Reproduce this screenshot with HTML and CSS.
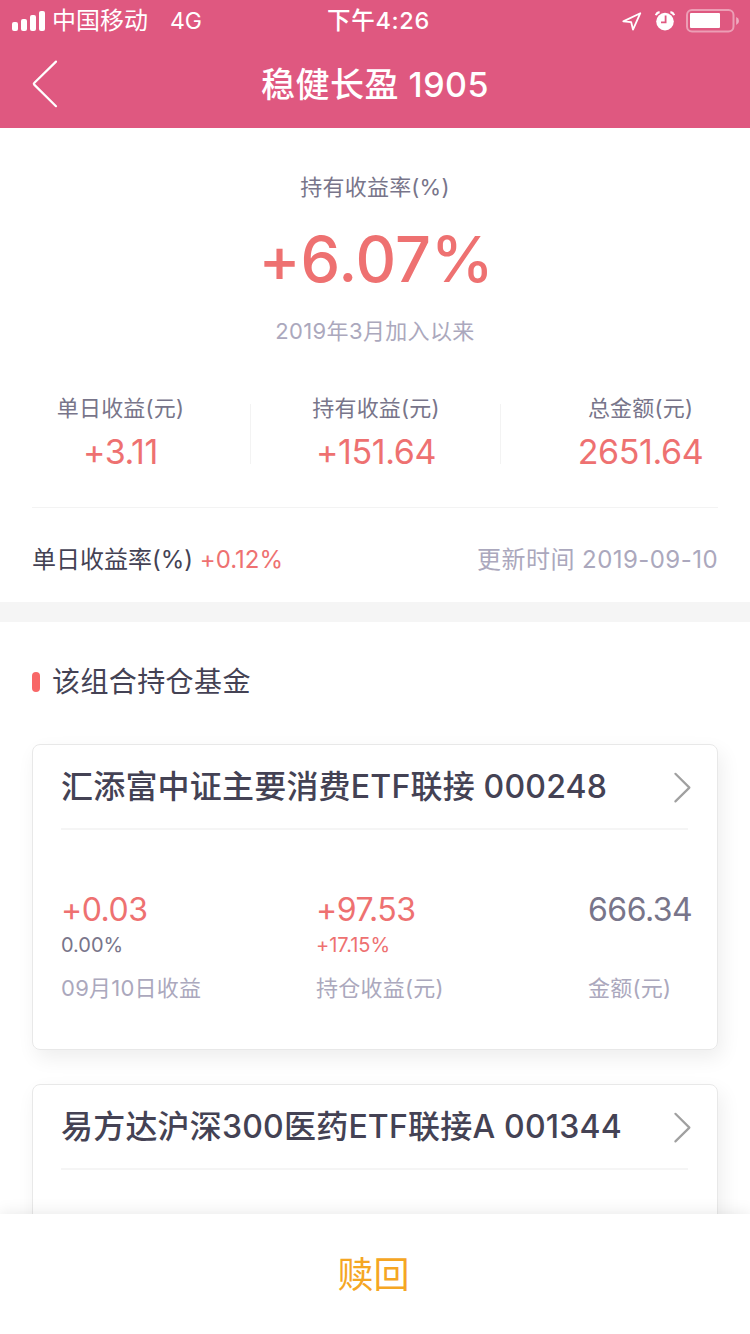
FILE: index.html
```
<!DOCTYPE html>
<html lang="zh-CN">

<head>
    <meta charset="UTF-8">
    <meta name="viewport" content="width=device-width, initial-scale=1.0">
    <title>稳健长盈 1905</title>
    <link rel="stylesheet" href="styles.css">
</head>

<body>

    <header class="header">
        <div class="status-bar">
            <div class="status-left">
                <svg class="signal" width="33" height="20" viewBox="0 0 33 20" fill="#fff">
                    <rect x="0" y="11" width="6" height="9" rx="2"/>
                    <rect x="9" y="8" width="6" height="12" rx="2"/>
                    <rect x="18" y="4" width="6" height="16" rx="2"/>
                    <rect x="27" y="0" width="6" height="20" rx="2"/>
                </svg>
                <span class="carrier">中国移动</span>
                <span class="network">4G</span>
            </div>
            <span class="time">下午4:26</span>
            <div class="status-right">
                <svg width="20" height="20" viewBox="0 0 20 20" fill="none" stroke="#fff" stroke-width="1.8" stroke-linejoin="round">
                    <path d="M18.3 2.2 L1.3 10.4 L9.2 11.2 L11 18.6 Z"/>
                </svg>
                <svg class="alarm" width="20" height="20" viewBox="0 0 20 20" fill="none">
                    <circle cx="10" cy="10.6" r="8.8" fill="#fff"/>
                    <path d="M.9 4.2 Q1.8 1.6 4.6 1.2 M19.1 4.2 Q18.2 1.6 15.4 1.2" stroke="#fff" stroke-width="2.2"/>
                    <path d="M10.6 4.6 V11.4 H6" stroke="#df5880" stroke-width="1.8"/>
                </svg>
                <svg class="battery" width="54" height="24" viewBox="0 0 54 24">
                    <rect x="1" y="1" width="46.5" height="21.5" rx="5" fill="none" stroke="#fff" stroke-opacity=".42" stroke-width="2"/>
                    <rect x="4" y="4" width="30" height="15" rx="1" fill="#fff"/>
                    <path d="M50.2 8 Q53 9.2 53 12 Q53 14.8 50.2 16 Z" fill="#fff" fill-opacity=".5"/>
                </svg>
            </div>
        </div>
        <div class="nav-bar">
            <svg class="back" width="28" height="50" viewBox="0 0 28 50" fill="none" stroke="#fff" stroke-width="2.2" stroke-linecap="round" stroke-linejoin="round">
                <path d="M25 1.6 L3.2 23 Q2.4 23.8 3.2 24.6 L25 46.2"/>
            </svg>
            <h1>稳健长盈 1905</h1>
        </div>
    </header>

    <section class="summary">
        <p class="label">持有收益率(%)</p>
        <p class="rate">+6.07%</p>
        <p class="since">2019年3月加入以来</p>

        <div class="stats">
            <div class="stat">
                <p class="label">单日收益(元)</p>
                <p class="value">+3.11</p>
            </div>
            <div class="stat">
                <p class="label">持有收益(元)</p>
                <p class="value">+151.64</p>
            </div>
            <div class="stat">
                <p class="label">总金额(元)</p>
                <p class="value">2651.64</p>
            </div>
        </div>

        <div class="daily">
            <p class="daily-rate">单日收益率(%) <span>+0.12%</span></p>
            <p class="updated">更新时间 2019-09-10</p>
        </div>
    </section>

    <section class="funds">
        <h2>该组合持仓基金</h2>

        <div class="card">
            <div class="card-title">
                <h3>汇添富中证主要消费ETF联接 000248</h3>
                <svg class="arrow" width="20" height="32" viewBox="0 0 20 32" fill="none" stroke="#a0a0a0" stroke-width="2.2" stroke-linecap="round" stroke-linejoin="round">
                    <path d="M3.4 2.8 L17.4 16.6 L3.4 30.4"/>
                </svg>
            </div>
            <div class="card-content">
                <div>
                    <p class="amount up">+0.03</p>
                    <p class="percent">0.00%</p>
                    <p class="caption">09月10日收益</p>
                </div>
                <div>
                    <p class="amount up">+97.53</p>
                    <p class="percent up">+17.15%</p>
                    <p class="caption">持仓收益(元)</p>
                </div>
                <div>
                    <p class="amount">666.34</p>
                    <p class="percent"></p>
                    <p class="caption">金额(元)</p>
                </div>
            </div>
        </div>

        <div class="card">
            <div class="card-title">
                <h3>易方达沪深300医药ETF联接A 001344</h3>
                <svg class="arrow" width="20" height="32" viewBox="0 0 20 32" fill="none" stroke="#a0a0a0" stroke-width="2.2" stroke-linecap="round" stroke-linejoin="round">
                    <path d="M3.4 2.8 L17.4 16.6 L3.4 30.4"/>
                </svg>
            </div>
            <div class="card-content"></div>
        </div>
    </section>

    <footer class="redeem">赎回</footer>

</body>

</html>
```
FILE: styles.css
```
* {
    margin: 0;
    padding: 0;
    box-sizing: border-box;
}

body {
    height: 1334px;
    overflow: hidden;
    display: flex;
    flex-direction: column;
    background-color: #fff;
    color: #444254;
    font-family: Inter, "Noto Sans CJK SC", sans-serif;
    font-feature-settings: "calt" 0;
    white-space: nowrap;
}

svg {
    display: block;
    flex-shrink: 0;
}

/* header */
.header {
    height: 128px;
    flex-shrink: 0;
    background-color: #df5880;
    color: #fff;
}

.status-bar {
    height: 40px;
    padding: 0 11px 0 12px;
    display: grid;
    grid-template-columns: 1fr auto 1fr;
    align-items: center;
    font-size: 24px;
    line-height: 42px;
}

.status-left,
.status-right {
    display: flex;
    align-items: center;
}

.status-right {
    justify-content: flex-end;
}

.carrier {
    margin-left: 7px;
}

.network {
    margin-left: 22px;
    font-size: 23px;
}

.time {
    padding-left: 6px;
    font-size: 23.5px;
    font-weight: 500;
    letter-spacing: 0.7px;
}

.alarm {
    margin-left: 13px;
}

.battery {
    margin-left: 11px;
    margin-right: -1px;
}

.nav-bar {
    height: 88px;
    padding: 0 31px;
    display: grid;
    grid-template-columns: 28px 1fr 28px;
    align-items: center;
}

.nav-bar h1 {
    font-size: 34px;
    font-weight: 500;
    letter-spacing: 0.5px;
    line-height: 90px;
    text-align: center;
}

/* summary */
.summary {
    flex-shrink: 0;
    padding-top: 42px;
    text-align: center;
    border-bottom: 20px solid #f5f5f5;
}

.label {
    font-size: 22px;
    letter-spacing: 0.2px;
    line-height: 34px;
    color: #78758a;
}

.rate {
    font-size: 63px;
    font-weight: 550;
    line-height: 80px;
    padding-left: 2px;
    margin-top: 15px;
    color: #ee7171;
}

.since {
    font-size: 22px;
    letter-spacing: 0.35px;
    line-height: 34px;
    margin-top: 15px;
    color: #aba8bd;
}

.stats {
    display: grid;
    grid-template-columns: 251px 250px 249px;
    margin-top: 43px;
}

.stat {
    height: 116px;
    position: relative;
}

.stat:first-child {
    padding-right: 10px;
}

.stat:last-child {
    padding-left: 30px;
}

.stat:not(:last-child)::after {
    content: "";
    position: absolute;
    top: 13px;
    right: 0;
    width: 1px;
    height: 60px;
    background-color: #f3f3f3;
}

.value {
    font-size: 34px;
    letter-spacing: -0.4px;
    line-height: 50px;
    margin-top: 2px;
    color: #ee7171;
}

.daily {
    display: flex;
    justify-content: space-between;
    margin: 0 32px;
    border-top: 1px solid #f3f3f3;
    font-size: 24px;
    line-height: 34px;
    padding: 35px 0 25px;
}

.daily-rate span {
    color: #ee7171;
}

.updated {
    letter-spacing: 0.45px;
    color: #aba8bd;
}

/* fund list */
.funds {
    flex: 1;
    min-height: 0;
    overflow: hidden;
    padding: 40px 32px 0;
}

.funds h2 {
    display: flex;
    align-items: center;
    height: 40px;
    font-size: 28px;
    font-weight: 400;
    letter-spacing: 0.4px;
    line-height: 42px;
    margin-bottom: 42px;
}

.funds h2::before {
    content: "";
    width: 8px;
    height: 20px;
    margin-right: 12px;
    border-radius: 4px;
    background-color: #f86767;
}

.card {
    height: 306px;
    margin-bottom: 34px;
    padding: 0 29px 0 28px;
    border: 1px solid #e8e8e8;
    border-radius: 8px;
    box-shadow: 4px 8px 20px rgba(0, 0, 0, 0.07);
}

.card-title {
    height: 85px;
    display: flex;
    align-items: center;
    justify-content: space-between;
    border-bottom: 2px solid #f5f5f5;
}

.card-title h3 {
    font-size: 32px;
    font-weight: 500;
    letter-spacing: 0.2px;
    line-height: 80px;
    padding-top: 1px;
}

.arrow {
    margin-right: -4px;
}

.card-content {
    display: grid;
    grid-template-columns: 255px 272px 100px;
    padding-top: 60px;
}

.amount {
    font-size: 32px;
    letter-spacing: -0.5px;
    line-height: 40px;
    color: #78758a;
}

.percent {
    height: 32px;
    font-size: 20px;
    line-height: 31px;
    color: #78758a;
}

.caption {
    font-size: 22px;
    letter-spacing: 0.25px;
    line-height: 34px;
    margin-top: 9px;
    color: #aba8bd;
}

.up {
    color: #ee7171;
}

.redeem {
    position: relative;
    height: 120px;
    flex-shrink: 0;
    background-color: #fff;
    box-shadow: 0 0 16px rgba(0, 0, 0, 0.1);
    color: #f5a623;
    font-size: 36px;
    line-height: 122px;
    padding-right: 3px;
    text-align: center;
}
```
